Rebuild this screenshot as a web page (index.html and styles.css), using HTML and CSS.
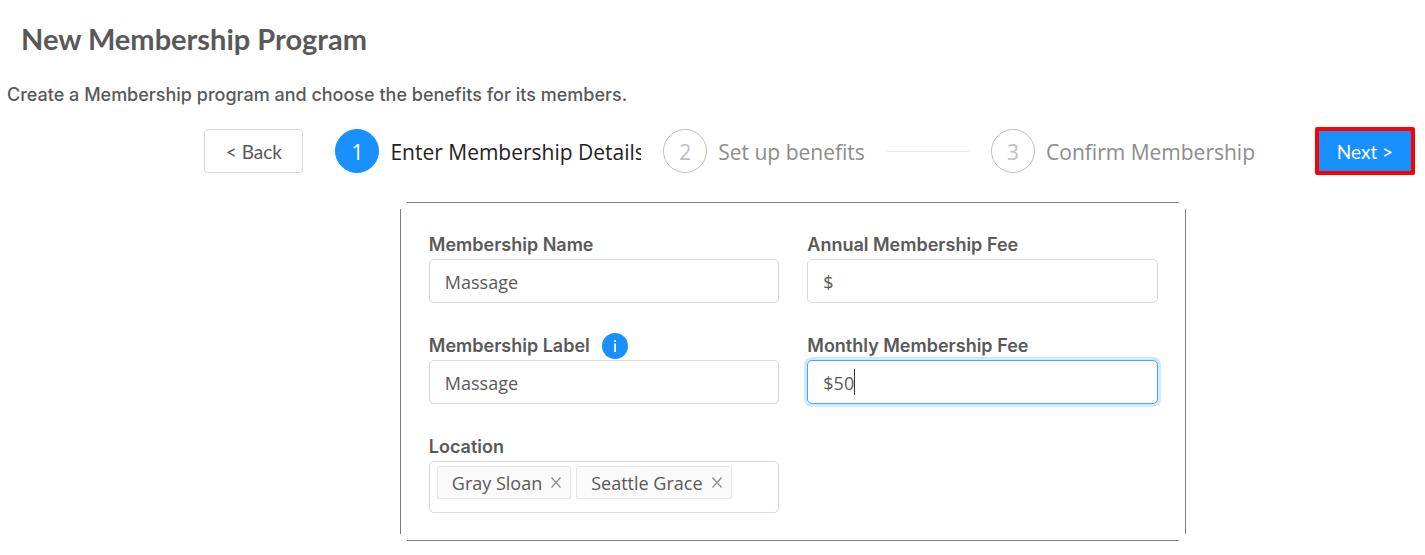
FILE: index.html
```html
<!DOCTYPE html>
<html lang="en">
<head>
<meta charset="utf-8">
<meta name="viewport" content="width=device-width, initial-scale=1">
<title>New Membership Program</title>
<link rel="stylesheet" href="styles.css">
</head>
<body>
<main class="page">
  <h1 class="title">New Membership Program</h1>
  <p class="intro">Create a Membership program and choose the benefits for its members.</p>

  <div class="toolbar">
    <button class="button button-back" type="button">&lt; Back</button>
    <ol class="steps">
      <li class="step step-active" aria-current="step"><span class="step-number">1</span><span class="step-title">Enter Membership Details</span></li>
      <li class="step step-line"><span class="step-number">2</span><span class="step-title">Set up benefits</span></li>
      <li class="step step-last"><span class="step-number">3</span><span class="step-title">Confirm Membership</span></li>
    </ol>
    <button class="button button-next" type="button">Next &gt;</button>
  </div>

  <form class="card">
    <div class="field">
      <div class="field-head"><label class="label" for="name">Membership Name</label></div>
      <input class="input" id="name" type="text" value="Massage">
    </div>
    <div class="field">
      <div class="field-head"><label class="label" for="annual">Annual Membership Fee</label></div>
      <input class="input" id="annual" type="text" value="$">
    </div>
    <div class="field">
      <div class="field-head"><label class="label" for="label">Membership Label</label><button class="info" type="button" aria-label="About the label"><svg class="info-icon" viewBox="0 0 26 26" aria-hidden="true"><path d="M12.2 7h1.8v2h-1.8zM12.2 10.500h1.800v8.500h-1.800z" fill="#fff"/></svg></button></div>
      <input class="input" id="label" type="text" value="Massage">
    </div>
    <div class="field">
      <div class="field-head"><label class="label" for="monthly">Monthly Membership Fee</label></div>
      <div class="input-wrap">
        <input class="input input-focused" id="monthly" type="text" value="$50">
        <span class="caret"></span>
      </div>
    </div>
    <div class="field">
      <div class="field-head"><span class="label" id="location">Location</span></div>
      <div class="tags" role="group" aria-labelledby="location">
        <span class="tag">Gray Sloan<button class="remove" type="button" aria-label="Remove Gray Sloan"><svg class="remove-icon" viewBox="0 0 10 10" aria-hidden="true"><path d="M.5 0 9.500 10M9.500 0 .5 10" stroke="#8c8c8c" stroke-width="1.200"/></svg></button></span>
        <span class="tag">Seattle Grace<button class="remove" type="button" aria-label="Remove Seattle Grace"><svg class="remove-icon" viewBox="0 0 10 10" aria-hidden="true"><path d="M.5 0 9.500 10M9.500 0 .5 10" stroke="#8c8c8c" stroke-width="1.200"/></svg></button></span>
      </div>
    </div>
  </form>
</main>
</body>
</html>
```
FILE: styles.css
```css
* { box-sizing: border-box; }
body {
  margin: 0;
  background: #fff;
  color: #595959;
  font-family: "Open Sans", "Noto Sans", sans-serif;
}
.page { padding: 19px 8px 14px 7px; }
.title, .button { font-family: Lato, "Open Sans", sans-serif; }
.intro, .label { font-family: Inter, "Open Sans", sans-serif; }
.title {
  margin: 0;
  padding-left: 14px;
  font-size: 29px;
  line-height: 40px;
  font-weight: 700;
}
.intro {
  margin: 24px 0 0;
  font-size: 18px;
  line-height: 24px;
  font-weight: 500;
}
.toolbar {
  display: flex;
  align-items: center;
  margin-top: 20px;
  padding: 0 2px 0 14%;
}
.button {
  flex: none;
  height: 44px;
  padding: 0;
  font-size: 19px;
  cursor: pointer;
}
.button-back {
  width: 99px;
  border: 1px solid #d9d9d9;
  border-radius: 4px;
  background: #fff;
  color: #595959;
  box-shadow: 0 2px 0 rgba(0, 0, 0, .02);
}
.button-next {
  width: 100px;
  height: 48px;
  border: 4px solid #f00;
  border-radius: 2px;
  background: #1890ff;
  color: #fff;
}
.steps {
  display: flex;
  flex: 1;
  gap: 22px;
  min-width: 0;
  margin: 0 60px 0 32px;
  padding: 0;
  list-style: none;
}
.step {
  display: flex;
  flex: 1;
  align-items: center;
  min-width: 0;
  overflow: hidden;
  white-space: nowrap;
  font-size: 21px;
  line-height: 44px;
  color: #8c8c8c;
}
.step-title { padding-top: 2px; }
.step-last { flex: none; }
.step-active { color: #222; font-weight: 500; }
.step-number {
  flex: none;
  width: 44px;
  height: 44px;
  margin-right: 11px;
  border: 1px solid #bfbfbf;
  border-radius: 50%;
  line-height: 44px;
  text-align: center;
  color: #bfbfbf;
}
.step-active .step-number {
  border-color: #1890ff;
  background: #1890ff;
  color: #fff;
  font-weight: 400;
}
.step-line::after {
  content: "";
  flex: 1;
  height: 1px;
  margin-left: 22px;
  background: #e8e8e8;
}
.card {
  display: grid;
  grid-template-columns: 1fr 1fr;
  gap: 30px 28px;
  width: 786px;
  max-width: 100%;
  margin: 27px auto 0;
  padding: 30px 28px 28px 29px;
  background:
    linear-gradient(#808080, #808080) center top / calc(100% - 14px) 1px no-repeat,
    linear-gradient(#808080, #808080) center bottom / calc(100% - 14px) 1px no-repeat,
    linear-gradient(#808080, #808080) left center / 1px calc(100% - 14px) no-repeat,
    linear-gradient(#808080, #808080) right center / 1px calc(100% - 14px) no-repeat;
}
@media (min-width: 1000px) {
  .card { margin-left: calc(28% - 2px); }
}
.field { min-width: 0; }
.field-head {
  display: flex;
  align-items: center;
  gap: 12px;
  height: 27px;
  padding-bottom: 2px;
}
.label { font-size: 18px; line-height: 24px; font-weight: 600; }
.info {
  width: 26px;
  height: 26px;
  padding: 0;
  border: 0;
  border-radius: 50%;
  background: #1890ff;
}
.info-icon { display: block; width: 26px; height: 26px; }
.input {
  display: block;
  width: 100%;
  height: 44px;
  padding: 2px 15px 0;
  border: 1px solid #d9d9d9;
  border-radius: 5px;
  background: #fff;
  color: #595959;
  font-family: inherit;
  font-size: 18px;
}
.input-wrap { position: relative; }
.input-focused { border-color: #40a9ff; box-shadow: 0 0 0 3px #d1e9ff; }
.caret {
  position: absolute;
  top: 9px;
  left: 47px;
  width: 1px;
  height: 26px;
  background: #333;
}
.tags {
  display: flex;
  align-items: flex-start;
  gap: 5px;
  height: 52px;
  padding: 4px 7px;
  border: 1px solid #d9d9d9;
  border-radius: 5px;
}
.tag {
  display: flex;
  align-items: center;
  gap: 9px;
  height: 33px;
  padding: 0 9px 0 14px;
  border: 1px solid #e8e8e8;
  border-radius: 2px;
  background: #fafafa;
  font-size: 18px;
  white-space: nowrap;
}
.remove { padding: 0; border: 0; background: none; }
.remove-icon { display: block; width: 10px; height: 11px; }
```
